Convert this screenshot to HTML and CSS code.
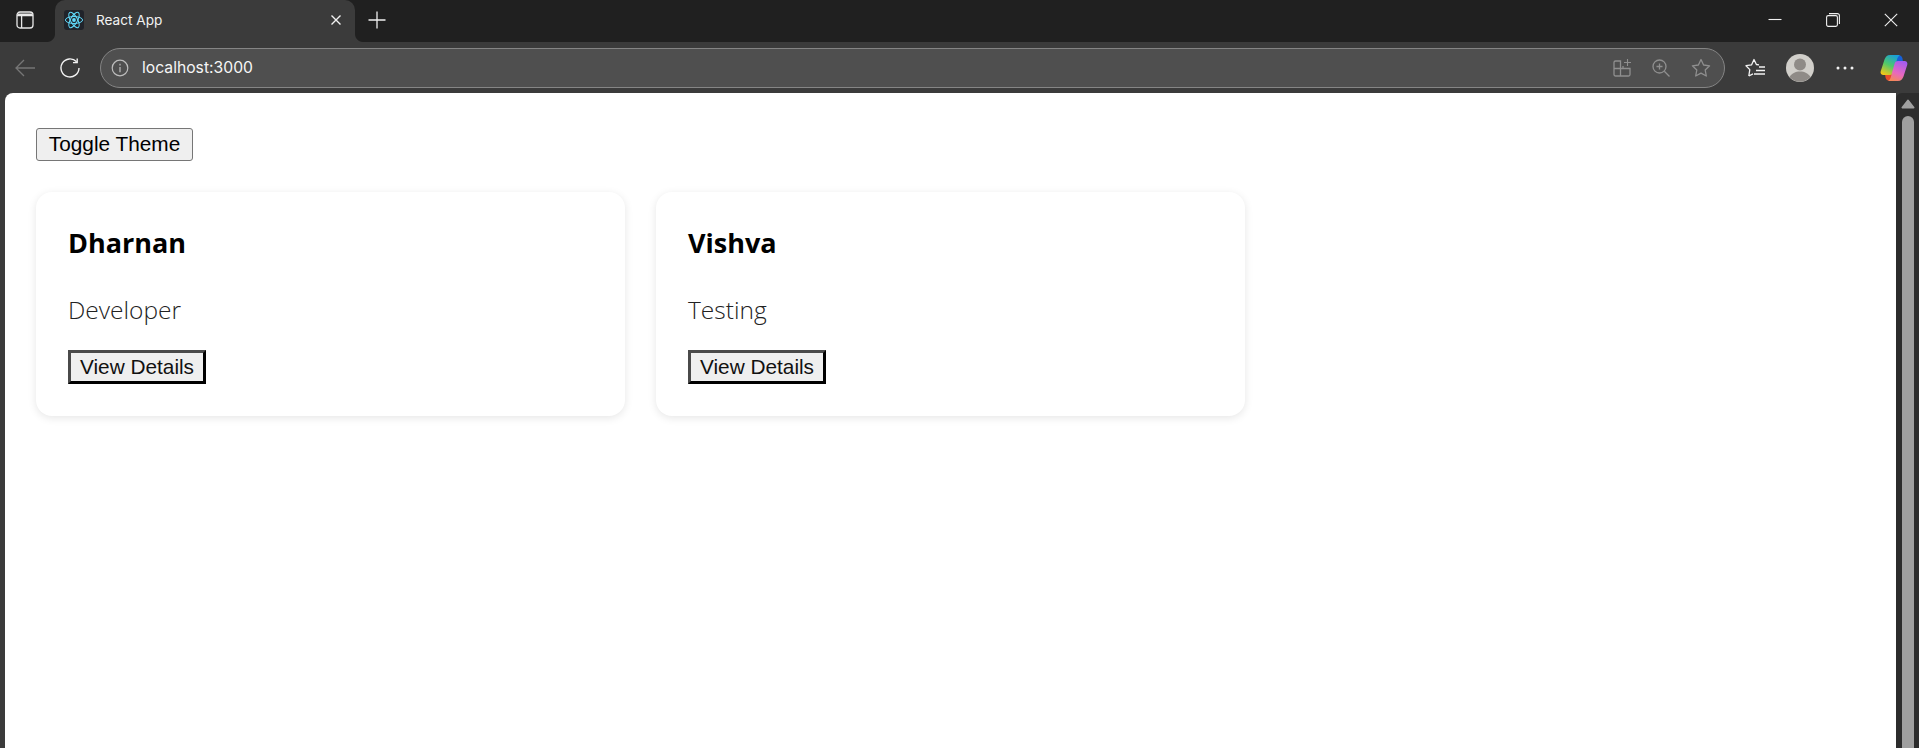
FILE: index.html
```html
<!DOCTYPE html>
<html lang="en">
<head>
<meta charset="utf-8">
<title>React App</title>
<link rel="stylesheet" href="styles.css">
</head>
<body>
<div class="browser">
  <header class="titlebar">
    <div class="sidebar-btn">
      <svg width="18" height="18" viewBox="0 0 18 18" fill="none" stroke="#e8e8e8" stroke-width="1.3"><rect x="1" y="1" width="16" height="16" rx="3"/><path d="M1 4.600h16M5.600 4.600V17" /><path d="M1.500 2.500h15v2h-15z" fill="#e8e8e8" stroke="none"/></svg>
    </div>
    <div class="tab">
      <span class="favicon">
        <svg width="20" height="20" viewBox="0 0 20 20" fill="none" stroke="#61dafb" stroke-width="1"><circle cx="10" cy="10" r="1.900" fill="#61dafb" stroke="none"/><ellipse cx="10" cy="10" rx="8.600" ry="3.500"/><ellipse cx="10" cy="10" rx="8.600" ry="3.500" transform="rotate(60 10 10)"/><ellipse cx="10" cy="10" rx="8.600" ry="3.500" transform="rotate(120 10 10)"/></svg>
      </span>
      <span class="tab-title">React App</span>
      <svg class="tab-close" width="12" height="12" viewBox="0 0 12 12" stroke="#f2f2f2" stroke-width="1.400"><path d="M1.500 1.500l9 9M10.500 1.500l-9 9"/></svg>
    </div>
    <svg class="new-tab" width="18" height="18" viewBox="0 0 18 18" stroke="#f0f0f0" stroke-width="1.300"><path d="M9 .5v17M.5 9h17"/></svg>
    <div class="window-controls">
      <svg width="14" height="14" viewBox="0 0 14 14" stroke="#f0f0f0" stroke-width="1.100"><path d="M.5 6.500h13"/></svg>
      <svg width="14" height="14" viewBox="0 0 14 14" fill="none" stroke="#f0f0f0" stroke-width="1.100"><rect x=".6" y="2.600" width="10.800" height="10.800" rx="1.600"/><path d="M3 .6h8.400a2 2 0 0 1 2 2V11"/></svg>
      <svg width="14" height="14" viewBox="0 0 14 14" stroke="#f0f0f0" stroke-width="1.100"><path d="M.8.8l12.400 12.400M13.200.8L.8 13.200"/></svg>
    </div>
  </header>
  <nav class="toolbar">
    <svg class="back" width="20" height="18" viewBox="0 0 20 18" fill="none" stroke="#767676" stroke-width="1.300"><path d="M20 9H1M9 1L1 9l8 8"/></svg>
    <svg class="reload" width="20" height="20" viewBox="0 0 20 20" fill="none" stroke="#f2f2f2" stroke-width="1.400"><path d="M16.600 3.800A9 9 0 1 0 19 10"/><path d="M17.200.6v4H13"/></svg>
    <div class="address">
      <svg class="info" width="18" height="18" viewBox="0 0 18 18" fill="none" stroke="#bdbdbd" stroke-width="1.200"><circle cx="9" cy="9" r="7.800"/><path d="M9 8v5.200M9 4.800v1.600"/></svg>
      <span class="url">localhost:3000</span>
      <div class="address-actions">
        <svg width="18" height="18" viewBox="0 0 18 18" fill="none" stroke="#8f8f8f" stroke-width="1.300"><path d="M2.500 2h5v15h-5A1.500 1.500 0 0 1 1 15.500v-12A1.500 1.500 0 0 1 2.500 2zM1 9.500h16v6a1.500 1.500 0 0 1-1.500 1.500h-8M10 9.500V7"/><path d="M14.500 0v7M11 3.500h7" stroke-width="1.100"/></svg>
        <svg width="18" height="18" viewBox="0 0 18 18" fill="none" stroke="#8f8f8f" stroke-width="1.300"><circle cx="7.500" cy="7.500" r="6.500"/><path d="M12.300 12.300L17.500 17.500M4.500 7.500h6M7.500 4.500v6"/></svg>
        <svg width="20" height="20" viewBox="0 0 20 20" fill="none" stroke="#8f8f8f" stroke-width="1.300"><path d="M10 1.500l2.600 5.500 6 .8-4.400 4.200 1.100 6L10 15.100 4.700 18l1.100-6L1.400 7.800l6-.8z" stroke-linejoin="round"/></svg>
      </div>
    </div>
    <svg class="favorites" width="20" height="20" viewBox="0 0 20 20" fill="none" stroke="#f2f2f2" stroke-width="1.300"><path d="M3.800 18l1-6.400L1 7.700l5.500-.8L9 1.500l2.400 5 2.600.4M14 9h6M11 12.500h9M9 16h11M3.800 18L8 15.800" stroke-linejoin="round"/></svg>
    <svg class="avatar" width="28" height="28" viewBox="0 0 28 28"><circle cx="14" cy="14" r="14" fill="#d1cfca"/><circle cx="14" cy="10.500" r="6" fill="#8f8b87"/><path d="M3.500 23a14 14 0 0 0 21 0c-2-3.500-6-5.500-10.500-5.500S5.500 19.500 3.500 23z" fill="#8f8b87"/></svg>
    <svg class="more" width="18" height="4" viewBox="0 0 18 4" fill="#f2f2f2"><circle cx="2" cy="2" r="1.500"/><circle cx="9" cy="2" r="1.500"/><circle cx="16" cy="2" r="1.500"/></svg>
    <svg class="copilot" width="28" height="26" viewBox="0 0 28 26">
      <defs>
        <linearGradient id="cpl" x1="0.700" y1="0" x2="0.200" y2="1"><stop offset="0" stop-color="#1a9fd8"/><stop offset="0.500" stop-color="#4fc86a"/><stop offset="1" stop-color="#f5c518"/></linearGradient>
        <linearGradient id="cpr" x1="0.700" y1="0" x2="0.300" y2="1"><stop offset="0" stop-color="#a45cf0"/><stop offset="0.600" stop-color="#e868c0"/><stop offset="1" stop-color="#f5885a"/></linearGradient>
      </defs>
      <path d="M11 0h7c2.500 0 4 1.500 4.500 3.500L23 7h-7l-3 3z" fill="#1660d8"/>
      <path d="M17 26h-7c-2.500 0-4-1.500-4.500-3.500L5 19h7l3-3z" fill="#e84a2a"/>
      <path d="M10 0C7 0 5.500 2 4.500 4.500L.8 16c-.8 2.500.7 4 3.200 4h6c2 0 3-1.200 3.600-3.200L17 4.500C17.500 2.500 18.500 1 20 0z" fill="url(#cpl)"/>
      <path d="M18 26c3 0 4.500-2 5.500-4.500L27.200 10c.8-2.500-.7-4-3.200-4h-6c-2 0-3 1.200-3.600 3.200L11 21.500C10.500 23.500 9.500 25 8 26z" fill="url(#cpr)"/>
    </svg>
  </nav>
  <div class="viewport">
    <main class="page">
      <button class="theme-toggle" type="button">Toggle Theme</button>
      <section class="card-grid">
        <article class="card">
          <h3 class="card-name">Dharnan</h3>
          <p class="card-role">Developer</p>
          <button class="details" type="button">View Details</button>
        </article>
        <article class="card">
          <h3 class="card-name">Vishva</h3>
          <p class="card-role">Testing</p>
          <button class="details" type="button">View Details</button>
        </article>
      </section>
    </main>
    <aside class="scrollbar">
      <svg class="scroll-arrow" width="14" height="10" viewBox="0 0 14 10" fill="#a0a0a0" stroke="#a0a0a0" stroke-width="2" stroke-linejoin="round"><path d="M7 1.500L1.500 8.500h11z"/></svg>
      <span class="scroll-thumb"></span>
    </aside>
  </div>
</div>
</body>
</html>
```
FILE: styles.css
```css
* { box-sizing: border-box; }
html, body { margin: 0; height: 100%; overflow: hidden; }
body { background: #3b3b3b; font-family: "Open Sans", "Noto Sans", sans-serif; }
.browser { display: flex; flex-direction: column; height: 748px; width: 1919px; }

.titlebar { display: flex; align-items: center; height: 42px; padding-bottom: 2px; background: #202020; flex: none; }
.sidebar-btn { display: flex; width: 55px; padding-left: 16px; }
.tab { position: relative; display: flex; align-items: center; align-self: flex-start; width: 300px; height: 42px; padding: 0 13px 2px 9px; background: #3b3b3b; border-radius: 10px 10px 0 0; color: #f2f2f2; }
.tab::before, .tab::after { content: ""; position: absolute; bottom: 0; width: 8px; height: 8px; }
.tab::before { left: -8px; background: radial-gradient(circle at 0 0, #202020 7.500px, #3b3b3b 8.500px); }
.tab::after { right: -8px; background: radial-gradient(circle at 100% 0, #202020 7.500px, #3b3b3b 8.500px); }
.favicon { display: flex; width: 20px; height: 20px; background: #20232a; border-radius: 3px; margin-right: 12px; }
.tab-title { flex: 1; font-family: "Inter", "Noto Sans", sans-serif; font-size: 13.600px; }
.new-tab { margin-left: 13px; }
.window-controls { display: flex; gap: 44px; margin-left: auto; padding-right: 21px; }

.toolbar { display: flex; align-items: center; height: 51px; flex: none; background: #3b3b3b; padding-left: 15px; }
.back { margin-right: 25px; }
.reload { margin-right: 20px; }
.address { display: flex; align-items: center; width: 1625px; height: 40px; border: 1.500px solid #858585; border-radius: 20px; background: #4f4f4f; padding: 0 13px 0 10px; }
.url { flex: 1; margin-left: 13px; color: #f6f6f6; font-family: "Inter", "Noto Sans", sans-serif; font-size: 15.700px; }
.address-actions { display: flex; align-items: center; gap: 21px; }
.favorites { margin-left: 20px; }
.avatar { margin-left: 21px; }
.more { margin-left: 22px; }
.copilot { margin-left: 26px; }

.viewport { display: flex; flex: 1; min-height: 0; padding-left: 5px; }
.page { flex: 1; background: #fff; border-radius: 8px 0 0 0; padding: 35px 31px; min-width: 0; }
.theme-toggle { display: block; width: 157px; height: 33px; padding: 0 0 2px; font-family: "Liberation Sans", Arial, sans-serif; font-size: 20.800px; color: #000; background: #efefef; border: 1px solid #767676; border-radius: 3px; }
.card-grid { display: grid; grid-template-columns: 589px 589px; gap: 31px; margin-top: 31px; }
.card { height: 224px; padding: 32px 32px; background: #fff; border-radius: 16px; box-shadow: 0 2px 8px rgba(0,0,0,.1); }
.card-name { margin: 0; font-size: 27px; font-weight: 700; line-height: 38px; color: #000; }
.card-role { margin: 32px 0 0; font-size: 24.500px; line-height: 32px; color: #222; font-weight: 300; }
.details { display: block; width: 138px; height: 34px; margin-top: 24px; padding: 0; font-family: "Liberation Sans", Arial, sans-serif; font-size: 20.800px; color: #111; background: #efefef; border: 3px solid; border-color: #4a4a4a #000 #000 #4a4a4a; }

.scrollbar { display: flex; flex-direction: column; align-items: center; width: 23px; flex: none; background: #2c2c2c; border-radius: 6px 0 0 0; padding-top: 6px; }
.scroll-arrow { flex: none; }
.scroll-thumb { flex: 1; width: 12px; margin-top: 7px; background: #9f9f9f; border-radius: 6px 6px 0 0; }
```
